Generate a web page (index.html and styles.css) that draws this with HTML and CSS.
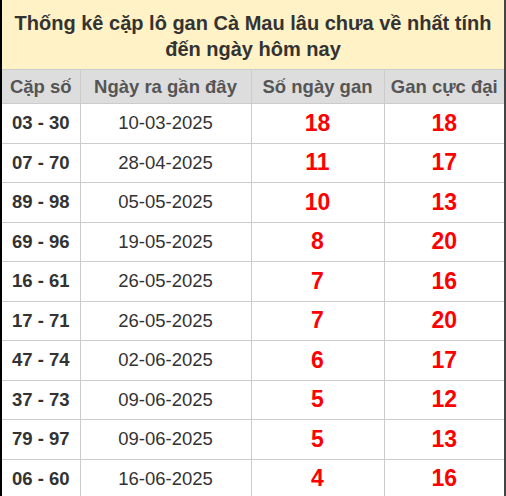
FILE: index.html
```html
<!DOCTYPE html>
<html lang="vi">
<head>
<meta charset="utf-8">
<link rel="stylesheet" href="styles.css">
</head>
<body>
<div class="frame">
  <div class="title">Thống kê cặp lô gan Cà Mau lâu chưa về nhất tính đến ngày hôm nay</div>
  <table class="gan">
    <colgroup>
      <col class="c1"><col class="c2"><col class="c3"><col class="c4">
    </colgroup>
    <thead>
      <tr><th>Cặp số</th><th>Ngày ra gần đây</th><th>Số ngày gan</th><th>Gan cực đại</th></tr>
    </thead>
    <tbody>
      <tr><td class="pair">03 - 30</td><td class="date">10-03-2025</td><td class="num">18</td><td class="num">18</td></tr>
      <tr><td class="pair">07 - 70</td><td class="date">28-04-2025</td><td class="num">11</td><td class="num">17</td></tr>
      <tr><td class="pair">89 - 98</td><td class="date">05-05-2025</td><td class="num">10</td><td class="num">13</td></tr>
      <tr><td class="pair">69 - 96</td><td class="date">19-05-2025</td><td class="num">8</td><td class="num">20</td></tr>
      <tr><td class="pair">16 - 61</td><td class="date">26-05-2025</td><td class="num">7</td><td class="num">16</td></tr>
      <tr><td class="pair">17 - 71</td><td class="date">26-05-2025</td><td class="num">7</td><td class="num">20</td></tr>
      <tr><td class="pair">47 - 74</td><td class="date">02-06-2025</td><td class="num">6</td><td class="num">17</td></tr>
      <tr><td class="pair">37 - 73</td><td class="date">09-06-2025</td><td class="num">5</td><td class="num">12</td></tr>
      <tr><td class="pair">79 - 97</td><td class="date">09-06-2025</td><td class="num">5</td><td class="num">13</td></tr>
      <tr><td class="pair">06 - 60</td><td class="date">16-06-2025</td><td class="num">4</td><td class="num">16</td></tr>
    </tbody>
  </table>
</div>
</body>
</html>
```

FILE: styles.css
```css
html, body {
  margin: 0;
  padding: 0;
  background: #fff;
}
body {
  font-family: "Liberation Sans", Arial, sans-serif;
  color: #333;
}
.frame {
  width: 502px;
  border-left: 2px solid #000;
  border-right: 2px solid #444;
  border-bottom: 2px solid #444;
  background: #fff;
}
.title {
  background: #fff2c6;
  font-weight: bold;
  font-size: 20px;
  line-height: 26px;
  text-align: center;
  padding: 10px 6px 7px;
  border-bottom: 1px solid #ccc;
}
.gan {
  width: 100%;
  border-collapse: collapse;
  table-layout: fixed;
}
.c1 { width: 78px; }
.c2 { width: 171px; }
.c3 { width: 133px; }
.c4 { width: auto; }
.gan th {
  background: #ddd;
  color: #555;
  font-weight: bold;
  font-size: 18.5px;
  height: 33px;
  padding: 0;
  border-left: 1px solid #ccc;
  border-bottom: 1px solid #ccc;
}
.gan td {
  height: 38.5px;
  padding: 0;
  text-align: center;
  border-left: 1px solid #ccc;
  border-bottom: 1px solid #ccc;
}
.gan th:first-child, .gan td:first-child { border-left: none; }
.gan tbody tr:last-child td { border-bottom: none; }
.pair {
  font-weight: bold;
  font-size: 18.5px;
  color: #333;
}
.date {
  font-size: 18.5px;
  color: #333;
}
.num {
  font-weight: bold;
  font-size: 23px;
  color: #f00;
}
```
